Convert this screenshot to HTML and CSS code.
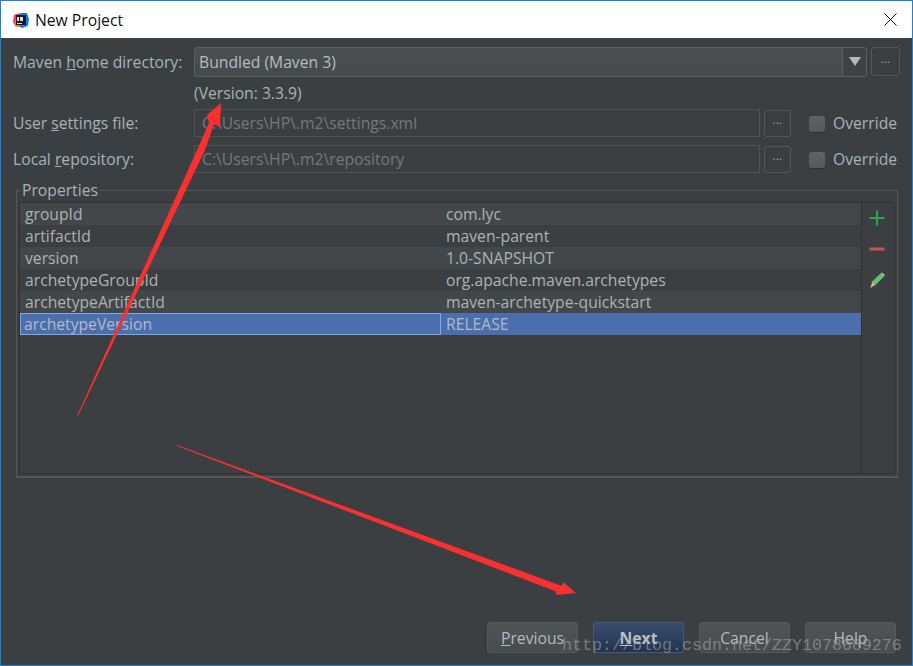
FILE: index.html
```html
<!DOCTYPE html>
<html lang="en">
<head>
<meta charset="utf-8">
<title>New Project</title>
<link rel="stylesheet" href="styles.css">
</head>
<body>
<div class="window">
  <header class="titlebar">
    <svg class="app-icon" width="16" height="16" viewBox="0 0 16 16">
      <path d="M1 3 L7 1 L8 9 L3 15 L0 10 Z" fill="#f0386b"/>
      <path d="M8 1 L14 1 L16 7 L15 14 L9 16 L5 14 L5 5 Z" fill="#087cfa"/>
      <path d="M1 9 L4 15 L7 15 L4 8 Z" fill="#fc801d"/>
      <rect x="3" y="3" width="10" height="10" fill="#1a1a1a"/>
      <rect x="4" y="11" width="5" height="1" fill="#ddd"/>
      <rect x="4" y="5" width="2" height="4" fill="#ddd"/>
      <rect x="7" y="5" width="3" height="4" fill="#ddd"/>
    </svg>
    <span class="title">New Project</span>
    <svg class="close" width="13" height="13" viewBox="0 0 13 13"><path d="M0.5 0.5 L12.5 12.5 M12.5 0.5 L0.5 12.5" stroke="#111" stroke-width="1" fill="none"/></svg>
  </header>

  <main class="content">
    <div class="row row-home">
      <label class="label">Maven <u>h</u>ome directory:</label>
      <div class="combo">
        <span class="combo-value">Bundled (Maven 3)</span>
        <span class="combo-arrow"><svg width="12" height="9" viewBox="0 0 12 9"><path d="M0 0 H12 L6 9 Z" fill="#b4b8ba"/></svg></span>
      </div>
      <button class="dots dots-home">...</button>
    </div>
    <div class="version">(Version: 3.3.9)</div>
    <div class="row row-file">
      <label class="label">User <u>s</u>ettings file:</label>
      <div class="field">C:\Users\HP\.m2\settings.xml</div>
      <button class="dots">...</button>
      <span class="check"></span>
      <span class="override">Override</span>
    </div>
    <div class="row row-file">
      <label class="label">Local <u>r</u>epository:</label>
      <div class="field">C:\Users\HP\.m2\repository</div>
      <button class="dots">...</button>
      <span class="check"></span>
      <span class="override">Override</span>
    </div>

    <fieldset class="group">
      <legend class="legend">Properties</legend>
      <div class="table-box">
        <div class="table">
          <div class="tr odd"><span class="td key">groupId</span><span class="td">com.lyc</span></div>
          <div class="tr"><span class="td key">artifactId</span><span class="td">maven-parent</span></div>
          <div class="tr odd"><span class="td key">version</span><span class="td">1.0-SNAPSHOT</span></div>
          <div class="tr"><span class="td key">archetypeGroupId</span><span class="td">org.apache.maven.archetypes</span></div>
          <div class="tr odd"><span class="td key">archetypeArtifactId</span><span class="td">maven-archetype-quickstart</span></div>
          <div class="tr selected"><span class="td key">archetypeVersion</span><span class="td">RELEASE</span></div>
        </div>
        <div class="tools">
          <svg class="tool" width="16" height="16" viewBox="0 0 16 16"><path d="M8 0.5 V15.5 M0.5 8 H15.5" stroke="#27a84a" stroke-width="2" fill="none"/></svg>
          <svg class="tool" width="16" height="16" viewBox="0 0 16 16"><rect x="0.5" y="6.5" width="15" height="3" fill="#c75450"/></svg>
          <svg class="tool" width="16" height="16" viewBox="0 0 16 16">
            <path d="M3 9.5 L11.5 1.5 L15 4.5 L6.5 13 Z" fill="#5fc56d"/>
            <path d="M11.5 1.5 L13 0.5 L16 3 L15 4.5 Z" fill="#a9b0ae"/>
            <path d="M3 9.5 L6.5 13 L2 15 Z" fill="#f0b46c"/>
            <path d="M1 16 L2.6 13.4 L3.6 14.6 Z" fill="#ddd"/>
          </svg>
        </div>
      </div>
    </fieldset>

    <footer class="buttons">
      <button class="btn"><u>P</u>revious</button>
      <button class="btn primary"><u>N</u>ext</button>
      <button class="btn">Cancel</button>
      <button class="btn">Help</button>
    </footer>
  </main>

  <svg class="arrows" width="913" height="666" viewBox="0 0 913 666">
    <path d="M77 416 L198 148 L209 123 L207 115 L221 103 L220 127 L214 124 L205 150 L78 416 Z" fill="#f9302f"/>
    <path d="M177 445 L562 586 L563 582 L576 593 L557 595 L555 591 L177 446 Z" fill="#f9302f"/>
  </svg>
  <div class="watermark">http://blog.csdn.net/ZZY1078689276</div>
</div>
</body>
</html>
```
FILE: styles.css
```css
* { box-sizing: border-box; }
html, body { margin: 0; padding: 0; }
body { width: 913px; height: 666px; overflow: hidden; font-family: "Open Sans", "Noto Sans", sans-serif; }

.window {
  position: relative;
  width: 913px;
  height: 666px;
  border: 1px solid #1883d7;
  display: flex;
  flex-direction: column;
  background: #3c3f41;
}

.titlebar {
  height: 37px;
  flex: none;
  background: #fff;
  display: flex;
  align-items: center;
  padding: 0 15px 0 12px;
  color: #111;
}
.app-icon { flex: none; }
.title { font-size: 15.7px; margin-left: 6px; }
.close { margin-left: auto; }

.content {
  flex: 1;
  display: flex;
  flex-direction: column;
  padding: 8px 0 0 12px;
  color: #a9b2b8;
  font-size: 15.7px;
}

.row { display: flex; align-items: center; }
.row-home { height: 31px; }
.row-file { height: 28px; margin-bottom: 8px; }
.label { width: 181px; flex: none; white-space: nowrap; }

.combo {
  width: 673px;
  height: 30px;
  display: flex;
  border: 1px solid #5c5f60;
  border-radius: 3px;
  background: linear-gradient(#4c5052, #45494a);
}
.combo-value { flex: 1; line-height: 28px; padding-left: 4px; color: #b5bcc0; }
.combo-arrow {
  width: 24px;
  flex: none;
  border-left: 1px solid #5c5f60;
  background: #3f4244;
  border-radius: 0 3px 3px 0;
  display: flex;
  align-items: center;
  justify-content: center;
}

.dots {
  width: 27px;
  height: 27px;
  flex: none;
  margin-left: 4px;
  padding: 0 0 6px;
  border: 1px solid #55585a;
  border-radius: 3px;
  background: #3c3f41;
  color: #b8bcbe;
  font: 10px "Open Sans", sans-serif;
  letter-spacing: 0.5px;
}
.dots-home { width: 29px; height: 29px; }

.version { height: 32px; padding: 5px 0 0 181px; line-height: 22px; }

.field {
  width: 566px;
  height: 28px;
  line-height: 26px;
  border: 1px solid #515455;
  padding-left: 7px;
  color: #75787b;
  background: #3c3f41;
  white-space: nowrap;
}

.check {
  width: 16px;
  height: 16px;
  flex: none;
  margin: 2px 0 0 18px;
  border-radius: 3px;
  background: linear-gradient(#606365, #56595b);
  box-shadow: 0 1px 0 #2e3031;
}
.override { margin-left: 8px; white-space: nowrap; }

.group {
  margin: 0 0 0 3px;
  padding: 0 2px 3px 2px;
  width: 882px;
  height: 297px;
  flex: none;
  border: 1px solid #54585a;
  border-width: 1px 1px 2px 1px;
  min-width: 0;
}
.legend { margin-left: 1px; padding: 0 2px; line-height: 18px; font-size: 15.7px; }

.table-box {
  height: 272px;
  margin-top: 3px;
  display: flex;
  border: 1px solid #2f3132;
}
.table { flex: 1; min-width: 0; }
.tr { display: flex; height: 22px; line-height: 22px; color: #aeb2b4; }
.tr.odd { background: #434749; }
.td { display: block; flex: 1; padding-left: 5px; white-space: nowrap; }
.td.key { flex: none; width: 421px; }
.tr.selected { background: #4b6eaf; color: #b4bac6; }
.tr.selected .key { border: 1px solid #75aee6; padding-left: 3px; line-height: 20px; }
.tools {
  width: 33px;
  flex: none;
  border-left: 1px solid #2f3132;
  display: flex;
  flex-direction: column;
  align-items: center;
  gap: 15px;
  padding: 7px 2px 0 0;
}
.tool { flex: none; }

.buttons {
  margin-top: auto;
  height: 43px;
  padding-left: 474px;
  display: flex;
  gap: 15px;
  align-items: flex-start;
}
.btn {
  width: 91px;
  height: 31px;
  padding: 0;
  border: 1px solid #55595b;
  border-radius: 3px;
  background: linear-gradient(#505456, #484c4e);
  color: #b3babf;
  font: 15.7px "Open Sans", sans-serif;
}
.btn.primary {
  background: linear-gradient(#384c6c, #233450);
  border-color: #46597a;
  color: #b9c0c4;
  font-weight: 700;
}

.arrows { position: absolute; left: -1px; top: -1px; pointer-events: none; }
.watermark {
  position: absolute;
  left: 561px;
  top: 635px;
  font: 16.67px/20px "Liberation Mono", monospace;
  color: rgba(175, 175, 170, 0.55);
  white-space: nowrap;
}
```
